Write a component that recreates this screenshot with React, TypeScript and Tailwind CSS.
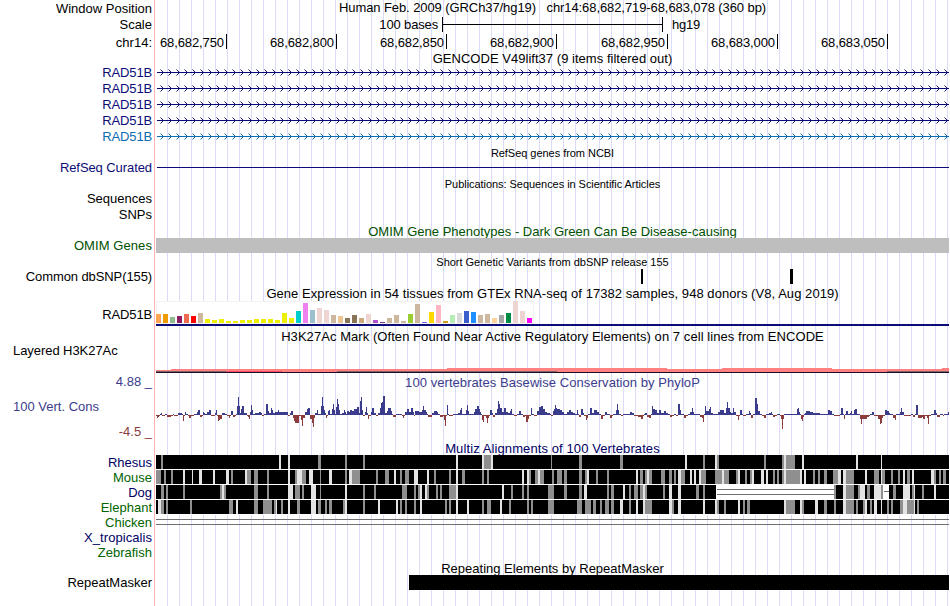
import type { ReactNode } from 'react';

/**
 * Genome browser view: every row is a label column on the left and a track
 * on the right. Track drawings use image x coordinates (156 - 949).
 */

const TRACK_X = 156;
const TRACK_W = 793;

const NAVY = '#0c0c78';
const LIGHT_BLUE = '#0c6cb0';

const TICKS = [
  { label: '68,682,750', width: 'w-[71px]' },
  { label: '68,682,800', width: 'w-[110px]' },
  { label: '68,682,850', width: 'w-[110px]' },
  { label: '68,682,900', width: 'w-[110px]' },
  { label: '68,682,950', width: 'w-[111px]' },
  { label: '68,683,000', width: 'w-[110px]' },
  { label: '68,683,050', width: 'w-[110px]' },
];

// Strand arrows on the gene lines, one every 8px
const ARROWS = Array.from({ length: 99 }, (_, i) => 160 + i * 8);

// GTEx tissues: [height, color]
const GTEX: [number, string][] = [
  [9, '#ffa54f'], [9, '#ee9a00'], [6, '#8fbc8f'], [7, '#8b1c62'], [9, '#ee6a50'], [7, '#ff0000'],
  [10, '#cdb79e'], [4, '#eeee00'], [3, '#eeee00'], [4, '#eeee00'], [2, '#eeee00'], [2, '#eeee00'],
  [3, '#eeee00'], [3, '#eeee00'], [4, '#eeee00'], [4, '#eeee00'], [4, '#eeee00'], [3, '#eeee00'],
  [10, '#eeee00'], [5, '#eeee00'], [12, '#00cdcd'], [20, '#ee82ee'], [13, '#9ac0cd'], [15, '#eed5d2'],
  [13, '#eed5d2'], [8, '#cdb79e'], [7, '#eec591'], [5, '#8b7355'], [8, '#8b7355'], [5, '#cdaa7d'],
  [9, '#eed5d2'], [3, '#b452cd'], [1, '#7a378b'], [5, '#cdb79e'], [8, '#cdb79e'], [2, '#cdb79e'],
  [9, '#9acd32'], [19, '#cdb79e'], [1, '#7a67ee'], [11, '#ffd700'], [18, '#ffb6c1'], [2, '#cd9b1d'],
  [8, '#b4eeb4'], [10, '#d9d9d9'], [12, '#3a5fcd'], [11, '#1e90ff'], [8, '#cdb79e'], [9, '#cdb79e'],
  [5, '#ffd39b'], [8, '#a6a6a6'], [10, '#008b45'], [22, '#eed5d2'], [12, '#eed5d2'], [5, '#ff00ff'],
];

// PhyloP scores as "x height" steps, each one holds until the next x
const PHYLOP = `156 -1,157 -3,158 -2,159 -1,160 1,161 2,162 -1,165 1,167 -2,171 -1,173 1,174 -1,178 2,182 1,183 -6,184 -1,185 3,186 1,188 -1,189 -3,191 -1,194 1,197 3,198 5,200 -2,202 -1,203 3,204 2,205 1,207 3,209 5,211 -1,215 2,216 5,217 -1,218 -6,219 -5,220 -4,222 2,225 1,227 -1,229 -3,230 -1,231 4,233 -2,235 -1,236 1,237 9,238 18,239 9,240 2,241 6,242 9,244 2,247 -1,248 -2,249 -4,250 3,251 10,252 5,253 1,255 2,259 3,261 2,262 -1,264 1,266 11,268 4,269 2,271 7,272 5,273 2,275 3,278 5,279 3,288 -1,290 2,291 4,293 -3,294 -6,295 -8,299 -1,301 -5,302 -11,303 -3,305 3,307 6,308 7,310 -4,312 -8,313 -12,314 -3,315 2,317 5,318 1,320 1,321 9,322 18,323 9,324 5,325 2,326 -3,327 -1,328 4,329 5,330 1,332 6,333 11,334 5,335 1,336 8,337 16,338 11,339 5,340 1,342 2,344 5,345 3,346 1,347 4,349 3,350 5,352 4,354 6,357 8,359 2,360 14,361 18,362 5,363 -1,365 3,366 8,367 2,368 -4,369 -1,371 3,372 7,374 2,376 -1,378 2,380 7,381 12,382 13,383 19,385 2,387 4,388 7,391 4,392 1,393 -2,396 1,402 -1,403 -3,404 -1,405 3,407 6,409 3,411 7,413 3,414 -1,415 4,419 3,422 5,423 9,424 5,426 3,427 1,428 -2,432 2,434 4,437 3,438 1,440 -2,443 -1,444 -5,445 -11,446 -1,447 10,448 1,449 -1,453 1,458 2,460 5,461 7,462 1,466 5,467 10,468 4,469 1,474 3,475 6,477 9,479 6,480 3,481 1,482 -5,483 -7,484 -1,486 -3,487 -8,488 -3,489 -1,490 5,492 2,493 -2,495 2,497 6,498 14,499 11,500 7,502 3,504 7,506 3,508 2,510 4,511 6,512 1,514 -1,517 1,519 4,521 1,523 -2,525 -1,526 -7,528 -4,529 -1,531 7,532 1,534 -1,537 4,539 8,541 9,543 6,545 3,547 2,550 1,551 -1,553 4,554 6,555 10,556 7,557 6,560 5,562 3,564 1,567 3,569 5,571 3,573 2,575 1,577 5,578 1,579 -2,581 6,583 2,584 -1,586 -5,587 -3,588 1,590 7,592 2,594 5,597 3,599 1,601 -4,603 -1,605 3,607 1,610 -3,612 -1,613 1,616 5,617 11,618 5,619 1,621 -1,623 1,630 3,632 2,634 -1,638 -2,641 -4,643 -1,644 1,645 2,647 -2,649 -3,651 1,652 9,653 6,655 5,657 2,659 5,661 2,664 4,666 2,668 1,670 -2,672 -1,674 1,676 -1,678 11,680 5,681 1,684 -3,686 -1,688 1,690 3,692 7,693 3,694 1,700 -2,702 -3,703 -7,704 1,705 9,706 4,708 4,709 6,710 8,711 2,713 1,718 3,720 5,724 2,726 7,727 13,728 7,730 3,731 2,733 7,734 3,736 -1,738 -5,739 -1,740 5,742 1,743 -1,746 1,749 4,750 2,751 -3,753 1,755 17,757 11,758 4,760 1,762 -1,764 -3,766 1,769 2,771 3,772 1,773 -2,775 -1,777 1,780 -1,781 -4,782 -14,783 -4,784 1,797 6,798 7,799 3,800 1,801 -4,802 -6,803 -2,804 1,805 2,806 4,810 3,813 2,820 1,828 5,830 4,832 1,834 -1,840 1,841 7,843 1,844 -4,845 1,846 4,848 1,850 2,851 4,852 1,854 5,855 6,857 1,860 -4,861 -9,862 -4,864 -4,867 -2,869 -1,870 1,872 3,874 -1,878 -4,880 -9,881 -8,882 -3,883 -1,885 5,887 4,889 2,890 1,893 -3,895 -5,896 1,900 3,901 7,902 3,904 -1,911 1,913 -2,915 1,916 10,918 -3,922 -2,923 -4,925 -1,927 -3,928 -9,929 -1,931 1,934 5,936 2,937 -2,940 1,943 -1,944 1,948 3`;

// Alignment marks on the black bars, "x width shade" (g = gray, w = light)
const RHESUS = '161 2 g,279 2 w,288 2 w,318 3 g,345 2 g,363 2 g,456 2 w,482 2 w,484 7 g,491 2 w,551 1 g,579 3 g,620 3 g,685 2 w,703 2 g,715 2 w,717 2 g,764 2 g,782 2 g,784 2 w,786 9 g,802 2 w,856 2 w,881 1 w';
const MOUSE = '156 5 g,164 2 g,171 2 g,183 2 w,192 1 w,199 3 w,213 2 w,226 3 w,231 2 g,245 2 w,247 4 g,254 4 g,267 2 g,288 2 w,295 2 g,297 5 w,302 4 g,309 4 w,320 1 g,329 3 w,345 2 g,349 3 w,352 8 g,376 2 g,385 4 g,394 2 w,400 2 g,405 4 g,414 4 w,427 2 w,434 2 g,449 2 g,456 2 w,462 3 g,482 2 g,487 2 g,522 2 w,527 2 w,529 2 g,535 3 g,538 2 w,540 4 g,552 2 g,557 5 g,564 3 g,579 3 g,585 2 g,587 2 w,596 2 g,607 2 g,636 2 w,640 3 g,645 2 g,647 2 w,649 3 g,661 4 g,669 3 g,674 2 g,678 3 w,681 4 g,690 2 w,694 2 w,699 2 w,701 5 g,715 7 g,722 2 w,724 5 g,736 2 g,738 2 w,745 2 g,750 2 g,752 2 w,761 3 w,766 2 w,773 2 g,777 2 g,782 2 g,784 2 w,786 14 g,800 2 w,804 2 w,813 2 g,818 2 g,824 3 g,833 5 g,838 3 w,843 3 w,846 8 g,865 2 w,874 5 g,881 1 w,882 3 g,891 2 g,898 2 g,903 2 w,907 3 g,912 2 w,931 3 w,934 2 g,939 2 g,943 3 g';
const DOG = '161 3 g,166 2 g,183 2 g,220 2 g,222 2 w,224 2 g,254 4 g,267 2 g,288 5 w,295 5 g,302 2 g,311 5 w,320 1 g,345 2 w,363 2 g,374 2 g,402 5 g,414 2 g,418 2 g,420 2 w,425 2 w,427 2 g,436 2 g,440 2 g,449 7 g,456 2 w,502 2 w,511 2 g,522 2 g,527 2 g,548 6 g,564 3 g,579 3 g,584 3 w,607 2 g,611 3 g,623 2 w,629 2 g,634 4 g,640 3 g,643 2 w,645 2 g,663 2 g,669 3 w,678 3 w,696 3 g,703 2 g,834 2 g,843 3 w,846 8 g,858 2 g,860 5 w,867 3 g,874 7 w,881 2 g,893 3 g,903 7 w,912 2 g,914 1 w,922 2 g,934 2 w';
const ELEPHANT = '158 3 w,161 3 g,166 2 g,190 2 g,229 4 g,236 2 w,254 4 g,263 9 g,274 2 g,276 1 w,281 2 g,288 2 w,297 3 g,311 5 w,318 3 g,325 2 g,329 3 g,343 2 g,345 2 w,363 2 g,378 2 w,396 2 w,400 2 g,405 2 g,414 2 g,420 2 w,445 2 g,449 2 g,456 2 w,467 2 w,482 2 g,487 4 g,500 2 w,509 2 g,527 2 g,531 2 g,548 6 g,577 5 g,585 6 g,593 3 g,600 2 g,605 4 g,611 3 g,620 3 w,629 2 g,636 2 w,643 2 w,645 7 g,669 3 w,672 2 g,678 3 w,703 2 w,715 2 w,717 2 g,724 2 g,738 2 w,743 2 g,747 3 g,784 2 w,786 9 g,800 2 w,802 2 g,815 3 w,824 3 g,834 2 g,843 3 w,846 8 g,856 2 g,863 2 g,865 2 w,870 2 g,874 3 w,881 1 w,887 2 g,891 2 g,900 3 g,903 4 w,907 7 g,914 1 w,917 2 g';

interface RowProps {
  label?: ReactNode;
  height?: string;
  labelClass?: string;
  children?: ReactNode;
}

function Row({ label, height = 'h-4', labelClass = 'leading-4', children }: RowProps) {
  return (
    <div className={`flex shrink-0 ${height}`}>
      <div className={`w-[155px] shrink-0 border-r border-[#ffb4b4] pr-0.5 text-right whitespace-pre ${labelClass}`}>{label}</div>
      <div className="ml-px w-[793px] shrink-0 bg-[linear-gradient(to_right,#dcdcf8_1px,transparent_1px)] bg-[length:12px_100%] bg-[position:11px_0]">
        {children}
      </div>
    </div>
  );
}

function TitleRow({ text, className = '', label }: { text: string; className?: string; label?: ReactNode }) {
  return (
    <Row height="h-[15px]" label={label} labelClass="leading-4 text-[#3c3c8c]">
      <div className={`text-center whitespace-pre leading-[17px] ${className}`}>{text}</div>
    </Row>
  );
}

function Drawing({ height, children }: { height: number; children: ReactNode }) {
  return (
    <svg className="block" width={TRACK_W} height={height} viewBox={`${TRACK_X} 0 ${TRACK_W} ${height}`} shapeRendering="crispEdges">
      {children}
    </svg>
  );
}

function GeneLine({ color }: { color: string }) {
  return (
    <Drawing height={16}>
      <rect x="157" y="7" width="792" height="1" fill={color} />
      {ARROWS.map((x) => (
        <g key={x} fill={color}>
          <path d={`M${x} 4h1v1h-1zM${x} 10h1v1h-1z`} opacity="0.5" />
          <path d={`M${x + 1} 5h1v1h-1zM${x + 2} 6h1v1h-1zM${x + 2} 8h1v1h-1zM${x + 1} 9h1v1h-1z`} />
        </g>
      ))}
    </Drawing>
  );
}

function Alignment({ marks, children }: { marks: string; children?: ReactNode }) {
  return (
    <Drawing height={15}>
      <rect x="156" y="0" width="793" height="15" fill="#fff" />
      <rect x="156" y="0" width="793" height="14" fill="#000" />
      {marks.split(',').map((mark) => {
        const [x, width, shade] = mark.split(' ');
        return <rect key={x} x={x} y="0" width={width} height="14" fill={shade === 'g' ? '#8f8f8f' : '#e3e3e3'} />;
      })}
      {children}
    </Drawing>
  );
}

function PhyloP() {
  const steps = PHYLOP.split(',').map((s) => s.split(' ').map(Number));
  return (
    <Drawing height={51}>
      {steps.map(([x, h], i) => {
        const end = i + 1 < steps.length ? steps[i + 1][0] : 949;
        return (
          <rect key={x} x={x} y={h > 0 ? 26 - h : 26} width={end - x} height={Math.abs(h)} fill={h > 0 ? '#3c3c8c' : '#8c3c3c'} />
        );
      })}
    </Drawing>
  );
}

export default function App() {
  return (
    <div className="flex h-[606px] w-[950px] flex-col overflow-hidden bg-white font-['Liberation_Sans',Arial,sans-serif] text-[13px] text-black">
      <Row label="Window Position" height="h-[17px]" labelClass="leading-[17px]">
        <div className="text-center leading-4 tracking-[-0.085px] whitespace-pre">Human Feb. 2009 (GRCh37/hg19)   chr14:68,682,719-68,683,078 (360 bp)</div>
      </Row>

      <Row label="Scale" height="h-[17px]">
        <div className="flex h-[15px] leading-4">
          <span className="w-[282px] text-right tracking-[-0.15px]">100 bases</span>
          <div className="ml-1 flex w-[221px] items-center border-x border-black">
            <div className="h-px w-full bg-black" />
          </div>
          <span className="ml-[9px] tracking-[-0.2px]">hg19</span>
        </div>
      </Row>

      <Row label="chr14:" labelClass="leading-[17px]">
        <div className="flex h-[15px] leading-[17px] tracking-[-0.1px]">
          {TICKS.map((tick) => (
            <div key={tick.label} className={`${tick.width} shrink-0 border-r border-black pr-0.5 text-right`}>
              {tick.label}
            </div>
          ))}
        </div>
      </Row>

      <TitleRow text="GENCODE V49lift37 (9 items filtered out)" className="tracking-[0.03px]" />
      {[1, 2, 3, 4].map((id) => (
        <Row key={id} label="RAD51B" labelClass="leading-4 tracking-[-0.15px] text-[#0c0c78]">
          <GeneLine color={NAVY} />
        </Row>
      ))}
      <Row label="RAD51B" labelClass="leading-4 tracking-[-0.15px] text-[#0c6cb0]">
        <GeneLine color={LIGHT_BLUE} />
      </Row>

      <TitleRow text="RefSeq genes from NCBI" className="text-[11px] tracking-[-0.04px]" />
      <Row label="RefSeq Curated" labelClass="leading-4 tracking-[-0.08px] text-[#0c0c78]">
        <Drawing height={16}>
          <rect x="157" y="7" width="792" height="1" fill={NAVY} />
        </Drawing>
      </Row>

      <TitleRow text="Publications: Sequences in Scientific Articles" className="text-[11px] tracking-[-0.05px]" />
      <Row label="Sequences" />
      <Row label="SNPs" />

      <TitleRow text="OMIM Gene Phenotypes - Dark Green Can Be Disease-causing" className="text-[#005000]" />
      <Row label="OMIM Genes" labelClass="leading-4 tracking-[0.08px] text-[#005000]">
        <div className="h-[15px] bg-[#bebebe]" />
      </Row>

      <TitleRow text="Short Genetic Variants from dbSNP release 155" className="text-[11px] tracking-[-0.02px]" />
      <Row label="Common dbSNP(155)" labelClass="leading-4 tracking-[-0.1px]">
        <Drawing height={16}>
          <rect x="641" y="0" width="2" height="15" />
          <rect x="790" y="0" width="3" height="15" />
        </Drawing>
      </Row>

      <TitleRow
        text="Gene Expression in 54 tissues from GTEx RNA-seq of 17382 samples, 948 donors (V8, Aug 2019)"
        className="tracking-[0.055px]"
      />
      <Row label="RAD51B" height="h-[28px]" labelClass="pt-[7px] leading-4 tracking-[-0.15px]">
        <Drawing height={28}>
          <rect x="156" y="1" width="378" height="23" fill="#f2f2f2" />
          <rect x="157" y="2" width="376" height="21" fill="#fff" />
          {GTEX.map(([h, color], i) => (
            <rect key={i} x={156 + i * 7} y={23 - h} width="5" height={h} fill={color} />
          ))}
          <rect x="156" y="24" width="793" height="2" fill={NAVY} />
        </Drawing>
      </Row>

      <TitleRow
        text="H3K27Ac Mark (Often Found Near Active Regulatory Elements) on 7 cell lines from ENCODE"
        className="tracking-[0.06px]"
      />
      <Row label="Layered H3K27Ac" height="h-[31px]" labelClass="pl-[13px] !text-left leading-4 tracking-[-0.06px]">
        <Drawing height={31}>
          <path d="M156 29V27H171V26H447V25H667V26H722V25H832V26H942V25H949V29z" fill="#ff8080" />
          <path d="M156 28h70v1h-70zM337 28h220v1h-220zM887 28h62v1h-62z" fill="#806468" />
          <rect x="226" y="28" width="56" height="1" fill="#ff4d66" />
          <rect x="156" y="29" width="793" height="1" fill="#1c0c24" />
        </Drawing>
      </Row>

      <TitleRow text="100 vertebrates Basewise Conservation by PhyloP" className="tracking-[0.06px] text-[#3c3c8c]" label="4.88 _" />
      <Row
        height="h-[51px]"
        labelClass="flex flex-col"
        label={
          <>
            <span className="pt-2.5 pl-[13px] text-left leading-4 text-[#3c3c8c]">100 Vert. Cons</span>
            <span className="pt-[9px] leading-4 text-[#8c3c3c]">-4.5 _</span>
          </>
        }
      >
        <PhyloP />
      </Row>

      <TitleRow text="Multiz Alignments of 100 Vertebrates" className="tracking-[0.1px] text-[#000064]" />
      <Row label="Rhesus" height="h-[15px]" labelClass="leading-4 text-[#000064]">
        <Alignment marks={RHESUS} />
      </Row>
      <Row label="Mouse" height="h-[15px]" labelClass="leading-4 text-[#006400]">
        <Alignment marks={MOUSE} />
      </Row>
      <Row label="Dog" height="h-[15px]" labelClass="leading-4 text-[#000064]">
        <Alignment marks={DOG}>
          <rect x="716" y="0" width="118" height="14" fill="#fff" />
          <path d="M717 4h117v1h-117zM717 9h117v1h-117z" fill="#707070" />
          <rect x="883" y="0" width="6" height="14" fill="#fff" />
          <rect x="884" y="6" width="5" height="1" fill="#707070" />
        </Alignment>
      </Row>
      <Row label="Elephant" height="h-[15px]" labelClass="leading-4 text-[#006400]">
        <Alignment marks={ELEPHANT} />
      </Row>
      <Row label="Chicken" height="h-[15px]" labelClass="leading-4 text-[#006400]">
        <Drawing height={15}>
          <path d="M156 4h793v1h-793zM156 9h793v1h-793z" fill="#707070" />
        </Drawing>
      </Row>
      <Row label="X_tropicalis" height="h-[15px]" labelClass="leading-4 tracking-[0.06px] text-[#000064]" />
      <Row label="Zebrafish" height="h-[15px]" labelClass="leading-4 text-[#006400]" />

      <TitleRow text="Repeating Elements by RepeatMasker" />
      <Row label="RepeatMasker" height="h-[15px]">
        <div className="ml-[253px] h-[15px] bg-black" />
      </Row>
      <Row height="h-4" />
    </div>
  );
}
